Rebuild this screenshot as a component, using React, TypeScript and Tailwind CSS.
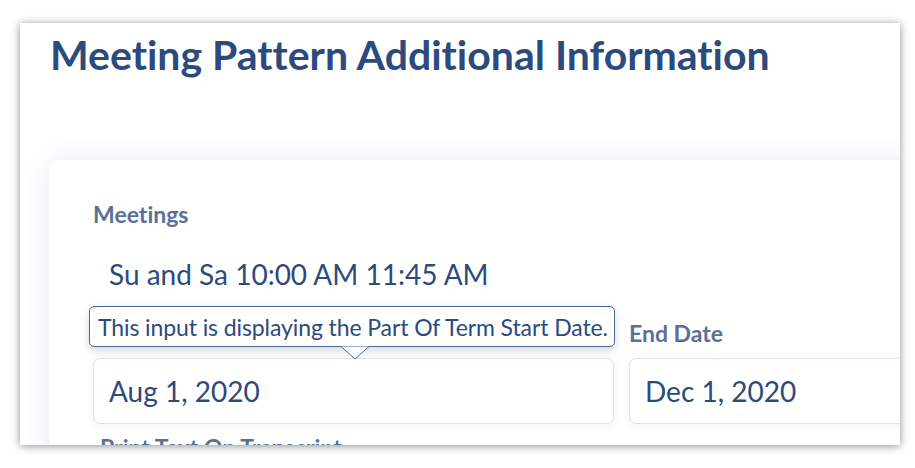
import React from "react";

const Field: React.FC<{ label: string; value: string; hideLabel?: boolean }> = ({ label, value, hideLabel }) => (
    <div className="flex flex-col w-[521px] shrink-0">
        <span className={`text-[23px] leading-[26px] font-bold text-[#5a7099] ${hideLabel ? "invisible" : ""}`}>{label}</span>
        <div className="mt-[12px] h-[66px] rounded-[7px] border border-[#dbe3ef] bg-white pl-[15px] flex items-center shadow-[0_2px_8px_rgba(60,90,140,0.06)]">
            <span className="text-[28px] leading-[36px] text-[#2c4a7c]">{value}</span>
        </div>
    </div>
);

const App: React.FC = () => {
    return (
        <div className="w-[915px] h-[468px] bg-white pl-[20px] pt-[23px] overflow-hidden [font-variant-ligatures:none]" style={{ fontFamily: "Lato, 'Open Sans', sans-serif" }}>
            <div className="w-[880px] h-[422px] bg-white overflow-hidden shadow-[0_1px_8px_rgba(0,0,0,0.45)] pl-[29px] pt-[7px]">
                <h1 className="pl-[1px] text-[41px] leading-[50px] font-bold text-[#2c4a7c] whitespace-nowrap">
                    Meeting Pattern Additional Information
                </h1>
                <div className="mt-[80px] w-[1200px] h-[400px] rounded-[8px] bg-white shadow-[0_0_24px_rgba(70,100,170,0.12)] pl-[44px] pt-[41px]">
                    <span className="block text-[23px] leading-[26px] font-bold text-[#5a7099]">Meetings</span>
                    <p className="mt-[29px] pl-[16px] text-[28px] leading-[36px] text-[#2c4a7c]">
                        Su and Sa 10:00 AM 11:45 AM
                    </p>
                    <div className="relative mt-[28px] flex gap-[15px]">
                        <Field label="Start Date" value="Aug 1, 2020" hideLabel />
                        <Field label="End Date" value="Dec 1, 2020" />
                        <div className="absolute left-[-4px] top-[-14px] h-[41px] rounded-[5px] border border-[#4d6797] bg-white pl-[8px] pr-[6px] flex items-center shadow-[0_4px_10px_rgba(0,0,0,0.15)]">
                            <span className="text-[23px] leading-[28px] text-[#2c4a7c] whitespace-nowrap tracking-[-0.1px]">
                                This input is displaying the Part Of Term Start Date.
                            </span>
                            <svg className="absolute left-[251px] top-[39px]" width="28" height="14" viewBox="0 0 28 14">
                                <path d="M0 0.5 L14 13 L28 0.5" fill="white" stroke="#4d6797" strokeWidth="1" />
                            </svg>
                        </div>
                    </div>
                    <span className="block mt-[10px] pl-[7px] text-[23px] leading-[26px] font-bold text-[#5a7099]">Print Text On Transcript</span>
                </div>
            </div>
        </div>
    );
};

export default App;
